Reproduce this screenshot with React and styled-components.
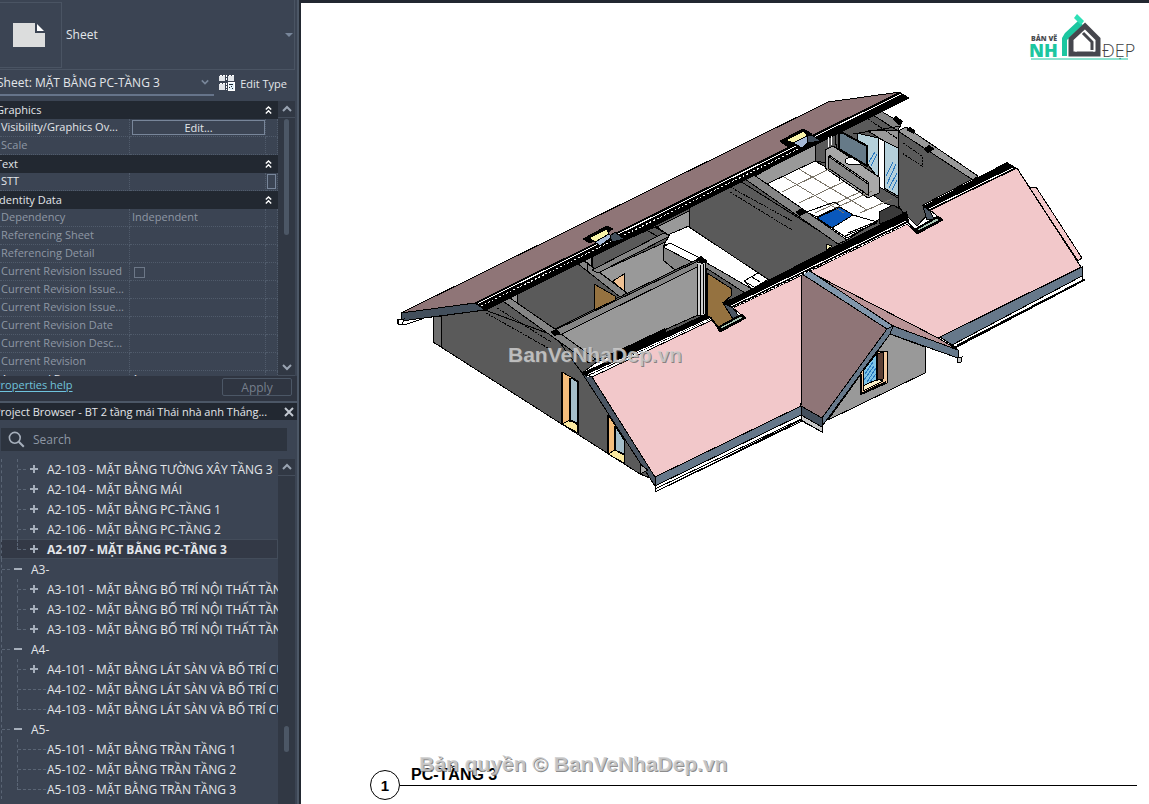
import { useState } from "react";
import styled, { createGlobalStyle } from "styled-components";

const GlobalStyle = createGlobalStyle`
  * {
    box-sizing: border-box;
  }
  body {
    margin: 0;
    font-family: "Open Sans", "Noto Sans", sans-serif;
    font-size: 12px;
    color: #e3e6ea;
    background: #222831;
  }
  button, input, select {
    font: inherit;
    color: inherit;
  }
`;

const Page = styled.div`
  position: relative;
  display: flex;
  height: 100vh;
  overflow: hidden;
`;

const Sidebar = styled.aside`
  display: flex;
  flex-direction: column;
  flex: 0 0 301px;
  min-width: 0;
  background: #3b4453;
  border-right: 2px solid #222831;
  overflow: hidden;
`;

const Panel = styled.section`
  display: flex;
  flex-direction: column;
  flex: ${(props) => (props.$grow ? "1 1 0" : "none")};
  min-height: 0;
  padding-right: 2px;
  border-right: 2px solid #4c5766;
`;

const TypeSelector = styled.button`
  display: flex;
  align-items: center;
  height: 70px;
  padding: 0 1px 0 0;
  border: 0;
  border-right: 1px solid #4a5463;
  border-bottom: 1px solid #4a5463;
  background: none;
  text-align: left;
`;

const Thumb = styled.span`
  display: flex;
  align-items: center;
  width: 62px;
  height: 66px;
  padding-left: 13px;
  border: 1px solid #4a5463;
  border-left: 0;
`;

const TypeName = styled.span`
  flex: 1;
  padding-left: 4px;
`;

const InstanceRow = styled.div`
  display: flex;
  height: 31px;
  padding-bottom: 5px;
`;

const Combo = styled.label`
  display: flex;
  align-items: center;
  flex: 1;
  border-bottom: 2px solid #66748a;
  padding-right: 5px;
`;

const ComboSelect = styled.select`
  flex: 1;
  min-width: 0;
  margin-left: -3px;
  padding: 0;
  border: 0;
  appearance: none;
  background: none;
  outline: none;
`;

const EditType = styled.button`
  display: flex;
  align-items: center;
  gap: 5px;
  padding: 0 8px 0 5px;
  border: 0;
  background: none;
  font-size: 11px;
  white-space: nowrap;
`;

const TableArea = styled.div`
  display: flex;
  height: 275px;
`;

const TableClip = styled.div`
  flex: 1;
  min-width: 0;
  overflow: hidden;
`;

const PropTable = styled.table`
  width: 100%;
  table-layout: fixed;
  border-collapse: separate;
  border-spacing: 0;
  font-size: 11px;
  line-height: 16px;
`;

const GroupHead = styled.th`
  height: 18px;
  padding: 0;
  background: #222831;
  font-weight: 400;
  text-align: left;
`;

const GroupButton = styled.button`
  display: flex;
  align-items: center;
  justify-content: space-between;
  width: 100%;
  height: 18px;
  padding: 0 6px 0 0;
  border: 0;
  background: none;
  line-height: 16px;

  span {
    margin-left: -4px;
  }
`;

const Cell = styled.td`
  height: 18px;
  padding: 0 0 1px ${(props) => (props.$value ? "2px" : "1px")};
  border-right: 1px dotted #505b6b;
  border-bottom: 1px dotted #505b6b;
  color: ${(props) => (props.$live ? "#e3e6ea" : "#8e97a4")};
  white-space: nowrap;
  overflow: hidden;
`;

const EditButton = styled.button`
  display: block;
  width: 100%;
  height: 15px;
  padding: 0;
  border: 1px solid #78869a;
  background: none;
  line-height: 13px;
`;

const SideButton = styled.button`
  display: block;
  width: 9px;
  height: 15px;
  padding: 0;
  border: 1px solid #78869a;
  background: none;
`;

const Tick = styled.input`
  display: block;
  appearance: none;
  width: 11px;
  height: 11px;
  margin: 2px 0 0 2px;
  border: 1px solid #6c7787;
`;

const Scrollbar = styled.div`
  display: flex;
  flex-direction: column;
  align-items: center;
  flex: 0 0 17px;
  background: #313844;
`;

const ScrollButton = styled.button`
  display: flex;
  align-items: center;
  justify-content: center;
  width: 17px;
  height: 17px;
  padding: 0;
  border: 0;
  border-bottom: 1px solid #444d5b;
  background: none;
`;

const ScrollTrack = styled.div`
  flex: 1;
  display: flex;
  flex-direction: column;
  padding-top: ${(props) => props.$before};
`;

const ScrollThumb = styled.div`
  width: 5px;
  height: ${(props) => props.$length};
  border-radius: 3px;
  background: #4c5766;
`;

const PanelFooter = styled.div`
  display: flex;
  justify-content: space-between;
  height: 25px;
  margin-right: -2px;
  padding: 2px 5px 4px 0;
  background: #2f3541;
`;

const HelpLink = styled.a`
  margin-left: -6px;
  font-size: 11px;
  line-height: 14px;
  color: #6fc3dc;
  text-underline-offset: 2px;
`;

const Apply = styled.button`
  width: 70px;
  height: 18px;
  padding: 0;
  border: 1px solid #4c5766;
  border-radius: 2px;
  background: none;
  color: #767f8c;
  line-height: 15px;
`;

const BrowserTitle = styled.header`
  display: flex;
  align-items: center;
  justify-content: space-between;
  height: 19px;
  margin-right: -2px;
  padding-right: 3px;
  border-top: 2px solid #4c5766;
  background: #222831;

  h2 {
    margin: 0 0 0 -6px;
    font-size: 11px;
    font-weight: 400;
    line-height: 16px;
    white-space: nowrap;
  }
`;

const CloseButton = styled.button`
  display: flex;
  padding: 0;
  border: 0;
  background: none;
`;

const SearchBox = styled.label`
  display: flex;
  align-items: center;
  gap: 8px;
  height: 23px;
  margin: 8px 8px 8px 1px;
  padding-left: 7px;
  background: #2d343f;

  input {
    flex: 1;
    min-width: 0;
    padding: 0;
    border: 0;
    outline: none;
    background: none;
  }
  input::placeholder {
    color: #8e97a4;
  }
`;

const TreeArea = styled.div`
  display: flex;
  flex: 1;
  min-height: 0;
`;

const Tree = styled.ul`
  flex: 1;
  min-width: 0;
  margin: 0;
  padding: 0;
  list-style: none;
  overflow: hidden;
`;

const TreeRow = styled.li`
  display: flex;
  align-items: center;
  height: 20px;
  padding-left: 1px;
  white-space: nowrap;
  font-weight: ${(props) => (props.$selected ? 700 : 400)};
  background: ${(props) => (props.$selected ? "#333946" : "none")};
  box-shadow: ${(props) => (props.$selected ? "inset 0 0 0 1px #434c5a" : "none")};
`;

const Guide = styled.span`
  flex: none;
  width: ${(props) => props.$width};
  height: ${(props) => (props.$last ? "11px" : "20px")};
  align-self: flex-start;
  border-left: 1px dashed #5a6575;
  background: ${(props) =>
    props.$branch
      ? "repeating-linear-gradient(90deg, #5a6575 0 3px, transparent 3px 5px) 0 10px / 100% 1px no-repeat"
      : "none"};
`;

const Toggle = styled.button`
  display: flex;
  flex: none;
  width: ${(props) => props.$width};
  padding: 0 0 0 2px;
  border: 0;
  background: none;
`;

const Canvas = styled.main`
  display: flex;
  flex-direction: column;
  flex: 1;
  min-width: 0;
  border-top: 3px solid #222831;
  background: #fff;
  color: #000;
`;

const LogoRow = styled.div`
  display: flex;
  justify-content: flex-end;
  padding: 11px 12px 0 0;
`;

const Viewport = styled.figure`
  margin: 18px 49px 0 89px;

  svg {
    display: block;
    width: 100%;
  }
`;

const SheetTitle = styled.footer`
  display: flex;
  align-items: flex-end;
  margin: auto 12px 4px 69px;
  font-family: "Liberation Sans", Arial, sans-serif;
  font-weight: 700;
`;

const Bubble = styled.span`
  display: flex;
  align-items: center;
  justify-content: center;
  width: 30px;
  height: 30px;
  border: 1px solid #000;
  border-radius: 50%;
  font-size: 15px;
`;

const ViewName = styled.h1`
  flex: 1;
  margin: 0 0 14px;
  padding: 0 0 1px 11px;
  border-bottom: 1px solid #000;
  font-size: 16px;
  line-height: 18px;
`;

const Watermark = styled.p`
  position: absolute;
  left: ${(props) => props.$left};
  bottom: ${(props) => props.$bottom};
  margin: 0;
  font: 700 21px/24px "Liberation Sans", Arial, sans-serif;
  color: rgba(205, 205, 205, 0.85);
  text-shadow: 1px 1px 0 rgba(110, 110, 110, 0.8);
  pointer-events: none;
  white-space: nowrap;
`;

const Chevron = ({ up, color = "#9aa4b2", size = 10 }) => (
  <svg width={size} height={size} viewBox="0 0 10 10" fill="none" stroke={color} strokeWidth="2">
    <path d={up ? "M1 7 5 3l4 4" : "M1 3l4 4 4-4"} />
  </svg>
);

const SheetIcon = () => (
  <svg width="32" height="24" viewBox="0 0 32 24">
    <path d="M0 0h22v10h10v14H0z" fill="#dcdddd" />
    <path d="M24 1v7h7z" fill="#fff" />
  </svg>
);

const EditTypeIcon = () => (
  <svg width="16" height="16" viewBox="0 0 16 16" shapeRendering="crispEdges">
    <path d="M0 1h6v5H0zM9 1h6v5H9zM0 9h6v6H0z" fill="#e3e6ea" />
    <path d="M1 0h6v6M10 0h6v6M1 8h6v7M9 8h7" fill="none" stroke="#fff" strokeDasharray="2 1" />
    <path d="M9 7h6v8H9z" fill="#dff0fa" stroke="#fff" />
    <path d="M10 9h4v1h-4zM10 12h1v1h-1zM12 11h1v1h-1zM13 13h1v1h-1z" fill="#222831" />
  </svg>
);

const CollapseIcon = () => (
  <svg width="7" height="8" viewBox="0 0 7 8" fill="none" stroke="#fff" strokeWidth="1.4">
    <path d="M.8 3.6 3.5 1l2.7 2.6M.8 7.4l2.7-2.6 2.7 2.6" />
  </svg>
);

const SearchIcon = () => (
  <svg width="17" height="17" viewBox="0 0 17 17" fill="none" stroke="#a6afbb" strokeWidth="1.6">
    <circle cx="6.8" cy="6.8" r="5.4" />
    <path d="M10.8 10.8l5 5" strokeWidth="2" />
  </svg>
);

const CloseIcon = () => (
  <svg width="10" height="10" viewBox="0 0 10 10" stroke="#c3c9d1" strokeWidth="2">
    <path d="M1 1l8 8M9 1L1 9" />
  </svg>
);

const SignIcon = ({ open }) => (
  <svg width="8" height="8" viewBox="0 0 8 8" stroke="#a6afbb" strokeWidth="2">
    <path d={open ? "M0 4h8" : "M0 4h8M4 0v8"} />
  </svg>
);

const Logo = () => (
  <svg width="108" height="48" viewBox="1029 14 108 48" role="img" aria-label="Bản vẽ nhà đẹp">
    <g fontFamily="Open Sans, sans-serif">
      <text x="1031" y="41" fontSize="7" fontWeight="800" fill="#4a4b50">BẢN VẼ</text>
      <text x="1029" y="57" fontSize="18" fontWeight="800" fill="#1cc6a0">NH</text>
      <text x="1102" y="57" fontSize="18" fontWeight="300" fill="#3c3d42">ĐẸP</text>
    </g>
    <path d="M1062 56V38l3-5 13-12 5 4-16 15v16z" fill="#1cc6a0" />
    <path d="M1077 14l7 7-3 4-7-7z" fill="#2ee0b6" />
    <path d="M1071 54V39l14-13 13 13v15z" fill="none" stroke="#45464d" strokeWidth="5" />
    <path d="M1076 52V41l9-9 9 9v11" fill="none" stroke="#fff" strokeWidth="1" />
    <path d="M1083 33l9 9v8" fill="none" stroke="#45464d" strokeWidth="3" />
    <path d="M1031 59h97" stroke="#1cc6a0" />
  </svg>
);

const DARK = "#5a5a5a";
const LIGHT = "#999999";
const CAP = "#858585";
const MAUVE = "#8f7577";
const PINK = "#f2c8ca";
const SLATE = "#66788a";

const shapes = [
  // rear slope and its eave
  ["401,313 650,190 828,102 900,92 475,303", MAUVE],
  // outer walls under the cut
  ["485,310 880,109 898,130 973,179 923,205 900,220 700,318 597,362 582,373", DARK],
  ["433,317 485,310 555,336 582,373 655,480 640,474 433,342", DARK],
  ["433,317 441,316 441,347 433,342", "#6f6f6f"],
  ["401,313 475,303 485,310 401,321", "#434f5c"],
  ["397,320 404,319 402,325 398,324", "#ffffff"],
  // left rooms
  ["500,298 517,293 517,306", LIGHT],
  ["517,293 577,263 625,294 553,330 517,307", DARK],
  ["594,284 615,296 615,300 594,310", "#957240"],
  ["500,299 507,296 597,358 589,363", CAP],
  ["577,263 583,260 591,256 591,271 583,266", LIGHT],
  ["592,255 657,226 670,236 597,271 592,268", DARK],
  ["597,273 670,240 700,258 626,294", LIGHT],
  ["613,281 624,274 624,292", "#f0c193"],
  ["577,263 583,260 627,293 620,297", CAP],
  ["592,270 664,233 670,236 598,273", CAP],
  ["561,334 697,266 698,315 597,360", LIGHT],
  ["553,331 700,260 703,264 560,335", CAP],
  // bathroom and corridor
  ["657,227 689,211 689,227 670,236", LIGHT],
  ["670,234 689,226 769,279 750,290 703,263 664,245", "#ffffff"],
  ["663,246 670,243 700,258 692,262 675,270 663,260", CAP],
  ["670,243 700,258 692,262 663,247", "#ffffff"],
  ["744,281 758,273 769,279 752,289", "#ffffff"],
  // partition
  ["689,208 740,181 840,244 769,280 689,227", DARK],
  ["705,262 752,289 744,293 735,292 705,274", CAP],
  ["706,268 745,293 723,303 707,315", DARK],
  ["707,273 732,289 731,296 723,303 735,320 720,328 707,315", "#957240"],
  ["697,263 705,262 705,315 698,315", "#cfcfcf"],
  // bedroom
  ["755,176 815,143 815,161 767,184", LIGHT],
  ["815,143 835,134 838,165 815,161", DARK],
  ["767,184 815,161 898,207 847,240", "#ffffff"],
  ["745,179 754,175 847,240 838,244", CAP],
  ["826,244 832,246 826,251", "#f7f2bb"],
  // glazed doors
  ["857,133 878,138 878,178 857,150", "#b5d0da"],
  ["878,138 884,141 884,190 878,188", "#ffffff"],
  ["884,141 898,148 898,196 884,188", "#b5d0da"],
  ["868,131 898,130 898,148 884,141", LIGHT],
  ["873,115 881,111 901,123 898,131", CAP],
  ["878,186 898,198 900,208 884,203 872,194", DARK],
  // tv unit
  ["825,150 833,146 879,177 879,193 868,198 825,168", "#a8a8a8"],
  ["828,156 868,184 868,195 828,168", "#858585"],
  // bed
  ["817,218 840,207 853,215 832,228", "#0a58bc"],
  ["806,212 835,202 840,206 817,217", "#ffffff"],
  ["832,228 853,215 877,222 847,238", "#ffffff"],
  ["879,212 893,205 902,210 902,215 880,224", "#3a3a3a"],
  // right wall
  ["898,130 973,179 923,205 930,212 917,226 902,211 898,205", DARK],
  ["898,131 906,127 978,176 973,180", LIGHT],
  // front slope
  ["592,377 712,320 720,331 745,318 733,308 800,276 907,224 917,233 942,220 930,210 1017,168 1081,267 940,337 801,406 655,477", PINK],
  ["1029,187 1036,187 1082,258 1078,261", PINK],
  ["582,373 592,377 655,477 655,486", "#4b5663"],
  ["655,477 801,406 801,415 655,486", SLATE],
  ["655,486 801,415 801,420 655,492", "#ffffff"],
  ["940,337 1082,267 1082,276 952,345", SLATE],
  ["952,345 1082,276 1082,281 955,347", "#ffffff"],
  ["640,474 640,464 648,470", "#a8a8a8"],
  // dormer
  ["890,334 925,347 925,373 828,420", LIGHT],
  ["810,272 893,326 958,350 940,339", "#b99496"],
  ["802,274 887,329 822,418 801,406", MAUVE],
  ["801,406 822,418 822,427 801,415", "#434f5c"],
  ["801,415 822,427 822,432 801,420", "#c8c8c8"],
  ["802,274 810,271 893,326 887,329", "#8197ac"],
  ["887,329 893,326 890,334 823,425 822,418", SLATE],
  ["893,326 958,350 958,358 890,334", SLATE],
  ["957,358 962,357 961,362 957,363", "#c8c8c8"],
  // dormer window
  ["860,374 877,351 887,351 887,383 860,395", "#f3c9a0"],
  ["863,371 877,353 877,381 863,386", "#7fc4e6"],
  ["877,354 883,352 883,379 877,380", "#5e4034"],
  ["863,386 878,379 883,381 863,391", "#f9efc8"],
  // gable windows
  ["562,372 578,381 578,433 562,424", "#f4bd7c"],
  ["571,378 578,382 578,423 570,420", "#a4bdc8"],
  ["562,424 570,420 578,425 578,433", "#fbe9a0"],
  ["608,415 624,438 624,462 608,454", "#f4bd7c"],
  ["615,426 624,440 624,454 615,450", "#a4bdc8"],
  ["608,454 615,450 624,455 624,463", "#fbe9a0"],
];

const cutBands = [
  "475,303 900,92 910,98 485,311",
  "582,373 705,314 713,318 586,377",
  "605,357 665,328 667,334 613,361",
  "723,303 907,211 909,222 733,308",
  "923,206 1007,162 1017,168 930,211",
  "550,332 556,329 561,333 555,336",
  "696,259 701,256 708,261 702,264",
  "795,212 802,208 808,212 800,216",
  "923,149 929,145 935,149 928,153",
];

const House = () => (
  <svg viewBox="390 80 710 420" shapeRendering="crispEdges" role="img" aria-label="PC-TẦNG 3">
    <g stroke="#000" strokeWidth="1">
      {shapes.map(([points, fill]) => (
        <polygon key={points} points={points} fill={fill} />
      ))}
    </g>
    <g fill="#000">
      {cutBands.map((points) => (
        <polygon key={points} points={points} />
      ))}
      <path d="M892 119l4-3 7 5-1 3-3 1zM906 130l4-3 5 3-1 4z" />
    </g>
    <g stroke="#fff" fill="none">
      <path d="M478 303.500L901 94M588 374.500l122-56M731 306l175-85M929 209l84-41" />
      <path d="M481 306L800 148M587 377l60-28M732 308l174-84" strokeDasharray="2 2" />
    </g>
    <g stroke="#000" fill="none">
      {/* linework on walls */}
      <path
        d="M486 313l62 35M497 308l54 34M730 187l62 34M730 192l62 38M868 119l30 20M903 143l19 13v10l-20-13"
        strokeDasharray="2 1"
      />
      <path d="M700 265v50M703 264v50M587 262v9M655 227l8 5M648 231l9 5" />
      <path d="M744 281l10 6M758 273l10 6M752 277l8 5M848 233l30-12M845 236l32-13" />
      <path d="M853 134l48-8" />
      <path d="M839 176v5M862 190v6" />
      <path d="M562 372v52M570 378v44M578 381v52M608 415v39M615 426v25" strokeWidth="2" />
      <path d="M877 352v29M861 374v20l25-12" strokeWidth="2" />
      {/* gutters */}
      <path d="M655 489l146-70M655 492l147-71 20 11M955 348l130-68M957 345l128-66M955 347l128-67M398 320v4l6 1 18-6" />
      <path d="M1017 168l12 19 50 77" />
    </g>
    <g stroke="#7a7468" fill="none">
      <path d="M784 177l60 36M799 169l68 41M782 192l49-24M799 203l44-21M815 213l45-21M838 207l34-16M860 213l32-14" />
    </g>
    <path d="M829 155l39 27v14" stroke="#000" fill="none" />
    <ellipse cx="854" cy="161" rx="9" ry="4" fill="#fff" stroke="#000" />
    <path d="M839 133h4l24 13v20l-28-17z" fill="#667a88" stroke="#000" strokeWidth="2" />
    <path d="M829 137l-1 10M832 136l-1 9" stroke="#fff" />
    <path
      d="M869 162l6-10M871 166l6-12M887 184l9-20M889 188l8-15M886 176l7-14M892 190l5-10M864 380l10-14M867 382l9-14M865 374l8-12M870 382l6-8"
      stroke="#2878c0"
    />
    {/* skylights */}
    <g stroke="#000">
      <polygon points="583,239 607,226 613,229 590,243" fill="#000" />
      <polygon points="589,238 607,229 609,234 595,242" fill="#f7f2a8" />
      <polygon points="595,242 609,234 612,237 600,246" fill="#a5b9d6" />
      <polygon points="610,236 615,232 624,239 612,242" fill="#434f5c" />
      <polygon points="780,141 803,129 812,134 788,147" fill="#000" />
      <polygon points="786,140 804,131 807,136 793,143" fill="#f7f2a8" />
      <polygon points="793,143 807,136 808,142 802,148" fill="#a5b9d6" />
      <polygon points="807,136 812,135 821,141 807,143" fill="#434f5c" />
      <polygon points="723,303 733,308 740,318 733,319" fill="#4b5663" />
      <polygon points="712,319 718,327 742,314 746,318 720,332" fill="#000" />
      <polygon points="720,327 741,316 743,318 721,329" fill="#a9c5b3" />
      <polygon points="923,206 930,211 934,219 927,220" fill="#4b5663" />
      <polygon points="908,222 915,229 938,216 943,220 917,234" fill="#000" />
      <polygon points="917,229 937,218 940,220 918,231" fill="#a9c5b3" />
    </g>
  </svg>
);

const groups = [
  {
    name: "Graphics",
    rows: [
      { name: "Visibility/Graphics Ov...", kind: "edit", live: true },
      { name: "Scale" },
    ],
  },
  { name: "Text", rows: [{ name: "STT", kind: "side", live: true }] },
  {
    name: "Identity Data",
    rows: [
      { name: "Dependency", value: "Independent" },
      { name: "Referencing Sheet" },
      { name: "Referencing Detail" },
      { name: "Current Revision Issued", kind: "tick" },
      { name: "Current Revision Issue..." },
      { name: "Current Revision Issue..." },
      { name: "Current Revision Date" },
      { name: "Current Revision Desc..." },
      { name: "Current Revision" },
      { name: "Approved By", value: "Approver", live: true },
    ],
  },
];

const sheets = [
  { label: "A2-103 - MẶT BẰNG TƯỜNG XÂY TẦNG 3", more: true },
  { label: "A2-104 - MẶT BẰNG MÁI", more: true },
  { label: "A2-105 - MẶT BẰNG PC-TẦNG 1", more: true },
  { label: "A2-106 - MẶT BẰNG PC-TẦNG 2", more: true },
  { label: "A2-107 - MẶT BẰNG PC-TẦNG 3", more: true, last: true },
  { label: "A3-", group: true },
  { label: "A3-101 - MẶT BẰNG BỐ TRÍ NỘI THẤT TẦNG 1", more: true },
  { label: "A3-102 - MẶT BẰNG BỐ TRÍ NỘI THẤT TẦNG 2", more: true },
  { label: "A3-103 - MẶT BẰNG BỐ TRÍ NỘI THẤT TẦNG 3", more: true, last: true },
  { label: "A4-", group: true },
  { label: "A4-101 - MẶT BẰNG LÁT SÀN VÀ BỐ TRÍ CỬA", more: true },
  { label: "A4-102 - MẶT BẰNG LÁT SÀN VÀ BỐ TRÍ CỬA" },
  { label: "A4-103 - MẶT BẰNG LÁT SÀN VÀ BỐ TRÍ CỬA", last: true },
  { label: "A5-", group: true },
  { label: "A5-101 - MẶT BẰNG TRẦN TẦNG 1" },
  { label: "A5-102 - MẶT BẰNG TRẦN TẦNG 2" },
  { label: "A5-103 - MẶT BẰNG TRẦN TẦNG 3", last: true },
];

const PropertyRow = ({ row }) => (
  <tr>
    <Cell $live={row.live}>{row.name}</Cell>
    <Cell $value $live={row.live}>
      {row.kind === "edit" && <EditButton>Edit...</EditButton>}
      {row.kind === "tick" && <Tick type="checkbox" aria-label={row.name} disabled />}
      {row.value}
    </Cell>
    <Cell>{row.kind === "side" && <SideButton aria-label={row.name} />}</Cell>
  </tr>
);

const Properties = () => (
  <Panel>
    <TypeSelector>
      <Thumb>
        <SheetIcon />
      </Thumb>
      <TypeName>Sheet</TypeName>
      <svg width="8" height="4" viewBox="0 0 8 4">
        <path d="M0 0h8L4 4z" fill="#78869a" />
      </svg>
    </TypeSelector>
    <InstanceRow>
      <Combo>
        <ComboSelect aria-label="Sheet">
          <option>Sheet: MẶT BẰNG PC-TẦNG 3</option>
        </ComboSelect>
        <Chevron color="#78869a" size={8} />
      </Combo>
      <EditType>
        <EditTypeIcon />
        Edit Type
      </EditType>
    </InstanceRow>
    <TableArea>
      <TableClip>
        <PropTable>
          <colgroup>
            <col width="130" />
            <col />
            <col width="12" />
          </colgroup>
          {groups.map((group) => (
            <tbody key={group.name}>
              <tr>
                <GroupHead colSpan={3}>
                  <GroupButton>
                    <span>{group.name}</span>
                    <CollapseIcon />
                  </GroupButton>
                </GroupHead>
              </tr>
              {group.rows.map((row, i) => (
                <PropertyRow key={i} row={row} />
              ))}
            </tbody>
          ))}
        </PropTable>
      </TableClip>
      <Scrollbar>
        <ScrollButton aria-label="Scroll up">
          <Chevron up />
        </ScrollButton>
        <ScrollTrack $before="1px">
          <ScrollThumb $length="116px" />
        </ScrollTrack>
        <ScrollButton aria-label="Scroll down">
          <Chevron />
        </ScrollButton>
      </Scrollbar>
    </TableArea>
    <PanelFooter>
      <HelpLink href="#help">Properties help</HelpLink>
      <Apply disabled>Apply</Apply>
    </PanelFooter>
  </Panel>
);

const ProjectBrowser = () => {
  const [selected, setSelected] = useState("A2-107 - MẶT BẰNG PC-TẦNG 3");

  return (
    <Panel $grow>
      <BrowserTitle>
        <h2>Project Browser - BT 2 tầng mái Thái nhà anh Thắng...</h2>
        <CloseButton aria-label="Close">
          <CloseIcon />
        </CloseButton>
      </BrowserTitle>
      <SearchBox>
        <SearchIcon />
        <input type="text" placeholder="Search" aria-label="Search" />
      </SearchBox>
      <TreeArea>
        <Tree>
          {sheets.map((sheet) => (
            <TreeRow
              key={sheet.label}
              $selected={sheet.label === selected}
              onClick={() => setSelected(sheet.label)}
            >
              <Guide $width={sheet.group ? "11px" : "16px"} $branch={sheet.group} />
              {!sheet.group && (
                <Guide $width={sheet.more ? "11px" : "30px"} $branch $last={sheet.last} />
              )}
              {(sheet.group || sheet.more) && (
                <Toggle $width="19px" aria-label={sheet.label}>
                  <SignIcon open={sheet.group} />
                </Toggle>
              )}
              {sheet.label}
            </TreeRow>
          ))}
        </Tree>
        <Scrollbar>
          <ScrollButton aria-label="Scroll up">
            <Chevron up />
          </ScrollButton>
          <ScrollTrack $before="250px">
            <ScrollThumb $length="26px" />
          </ScrollTrack>
        </Scrollbar>
      </TreeArea>
    </Panel>
  );
};

const App = () => (
  <Page>
    <GlobalStyle />
    <Sidebar>
      <Properties />
      <ProjectBrowser />
    </Sidebar>
    <Canvas>
      <LogoRow>
        <Logo />
      </LogoRow>
      <Viewport>
        <House />
      </Viewport>
      <SheetTitle>
        <Bubble>1</Bubble>
        <ViewName>PC-TẦNG 3</ViewName>
      </SheetTitle>
    </Canvas>
    <Watermark $left="508px" $bottom="437px">BanVeNhaDep.vn</Watermark>
    <Watermark $left="419px" $bottom="28px">Bản quyền © BanVeNhaDep.vn</Watermark>
  </Page>
);

export default App;
